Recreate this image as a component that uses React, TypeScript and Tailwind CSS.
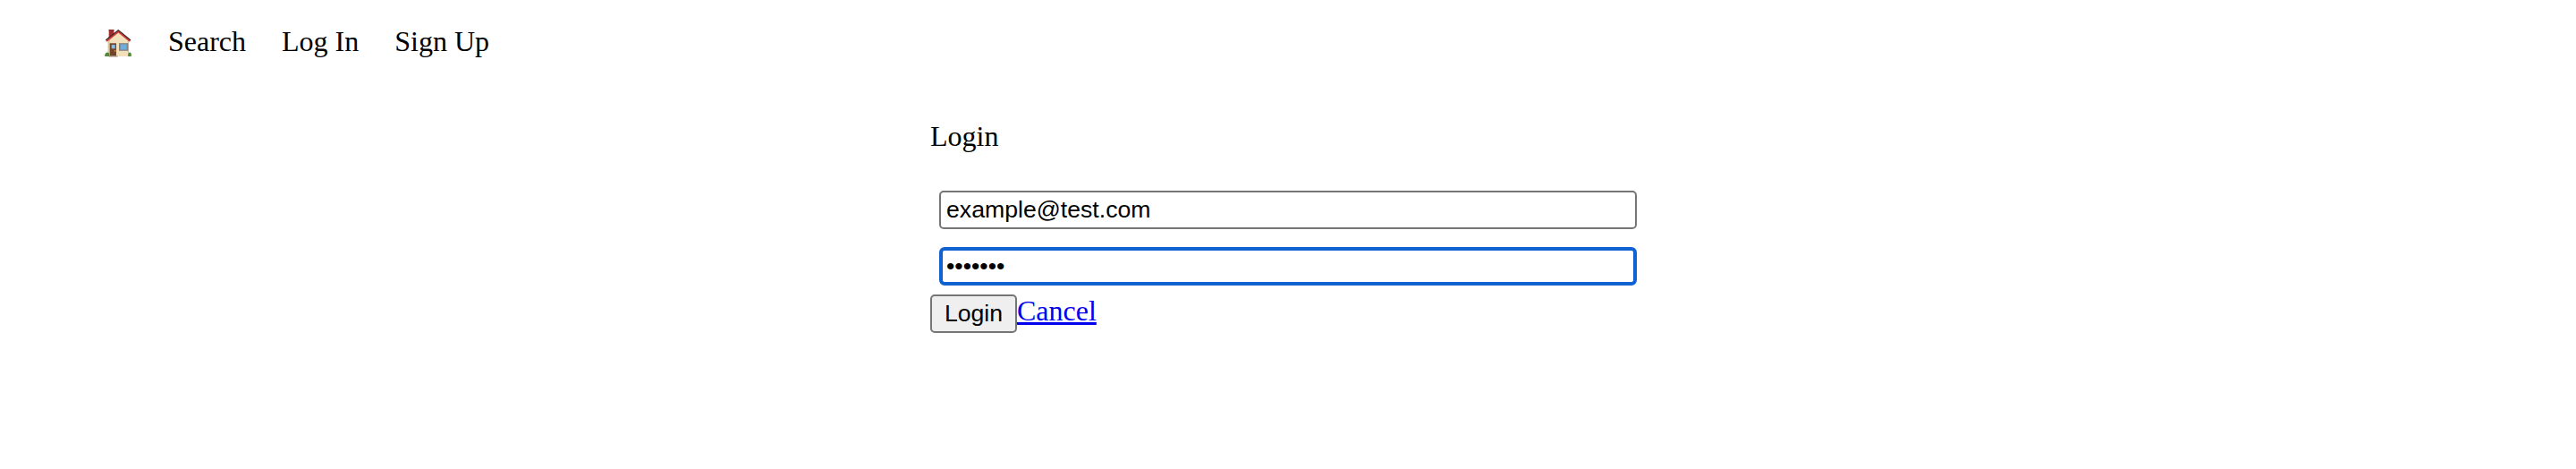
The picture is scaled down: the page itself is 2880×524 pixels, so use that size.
import React from "react";

function HouseIcon() {
  return (
    <svg viewBox="0 0 30 31" className="block h-[31px] w-[30px]" aria-hidden="true">
      <path d="M3.700 12 15.300 2 27 12v18H3.700z" fill="#f2dfbc" />
      <path d="M3.700 12.500V27H5.700V11z" fill="#dcc59b" />
      <path d="M26 12v18h1V12z" fill="#d8c096" />
      <path d="M4.700 0.200h5.700v5.300L4.700 10z" fill="#a32c2c" />
      <path d="M4.700 0.200h5.700v1.300H4.700z" fill="#8a2424" />
      <path d="M2 13 15.300 2.200 28.400 12.800" fill="none" stroke="#d03a35" strokeWidth="2.200" />
      <path d="M1.300 11.800 15.300 0.700l13.600 11" fill="none" stroke="#3b2a2c" strokeWidth="1.100" />
      <path d="M5.700 15.300H13V30H5.700z" fill="#74432a" />
      <path d="M7.700 17h4v4.300h-4z" fill="#7dbdec" />
      <circle cx="11.600" cy="23.800" r="0.900" fill="#dd9c4c" />
      <path d="M16 15.200h10.300v8.600H16z" fill="#85817c" />
      <path d="M17.600 16.500h7v6h-7z" fill="#6daee2" />
      <path d="M4.700 29.300h10v1.400h-10z" fill="#b3a597" />
      <path d="M0.200 30c-.3-2.800 1-4.500 3-4.500 1.700 0 2.400 1.700 2.200 4.500z" fill="#4f8a34" />
      <path d="M26.200 30c-.2-2.800.5-4.500 1.900-4.500 1.300 0 1.900 1.700 1.700 4.500z" fill="#4f8a34" />
    </svg>
  );
}

export default function App() {
  return (
    <div className="h-[524px] w-full overflow-hidden bg-white font-['Liberation_Serif',serif] text-[32px] leading-[36px] text-black">
      <nav className="flex items-start gap-10 pl-[117px] pt-[28px]">
        <a className="mt-[5px] w-[31px]" aria-label="Home">
          <HouseIcon />
        </a>
        <a>Search</a>
        <a>Log In</a>
        <a>Sign Up</a>
      </nav>
      <form className="ml-[1040px] mt-[70px] w-[800px]">
        <p>Login</p>
        <div className="flex flex-col gap-5 px-[10px] pt-[43px]">
          <input
            type="text"
            defaultValue="example@test.com"
            className="block h-[43px] w-full rounded-[5px] border-2 border-[#767676] bg-white px-[6px] font-['Liberation_Sans',sans-serif] text-[26.667px] leading-[30px] outline-none"
          />
          <input
            type="password"
            defaultValue="example"
            className="block h-[43px] w-full rounded-[6px] border-4 border-[#1062d0] bg-white px-[4px] font-['Liberation_Sans',sans-serif] text-[26.667px] leading-[30px] outline-none"
          />
        </div>
        <div className="flex items-start pt-[10px]">
          <button
            type="button"
            className="h-[43px] w-[97px] rounded-[5px] border-2 border-[#767676] bg-[#efefef] pb-[2px] text-center font-['Liberation_Sans',sans-serif] text-[26.667px] leading-[30px]"
          >
            Login
          </button>
          <a className="text-[#0000ee] underline decoration-[3px] underline-offset-[2px]">Cancel</a>
        </div>
      </form>
    </div>
  );
}
